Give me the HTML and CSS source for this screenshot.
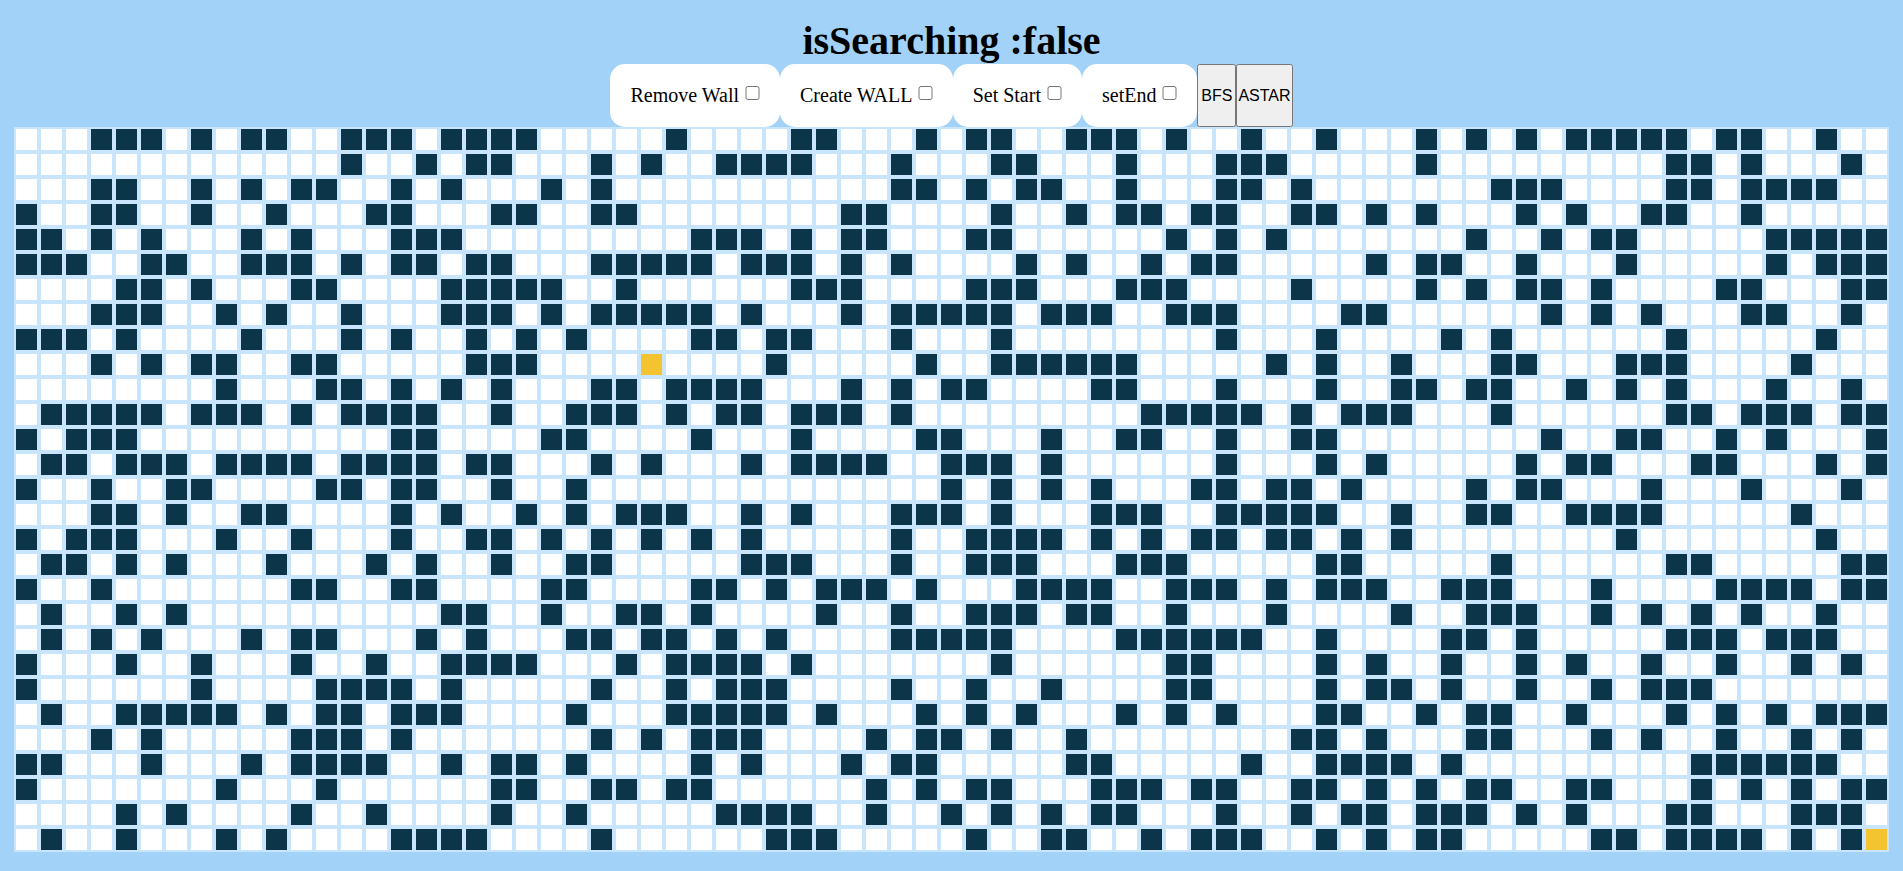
FILE: index.html
```html
<!DOCTYPE html>
<html lang="en">
<head>
<meta charset="utf-8">
<title>Pathfinding</title>
<link rel="stylesheet" href="styles.css">
</head>
<body>
<main class="app">
  <h1 class="status">isSearching :false</h1>
  <div class="controls">
    <label class="control">Remove Wall <input class="toggle" type="checkbox"></label>
    <label class="control">Create WALL <input class="toggle" type="checkbox"></label>
    <label class="control">Set Start <input class="toggle" type="checkbox"></label>
    <label class="control">setEnd <input class="toggle" type="checkbox"></label>
    <button class="run" type="button">BFS</button>
    <button class="run" type="button">ASTAR</button>
  </div>
  <div class="grid" id="grid"></div>
</main>
<script src="script.js"></script>
</body>
</html>
```
FILE: styles.css
```css
html, body {
  margin: 0;
  height: 100%;
}
body {
  background: #a2d2f7;
  color: #000;
  font-family: "Liberation Serif", "Times New Roman", serif;
  overflow: hidden;
}
.app {
  display: flex;
  flex-direction: column;
  align-items: center;
}
.status {
  margin: 18px 0 0;
  font-size: 40px;
  line-height: 46px;
  font-weight: bold;
}
.controls {
  display: flex;
  justify-content: center;
  align-items: stretch;
}
.control {
  padding: 20px 18px 20px 20px;
  background: #fff;
  border-radius: 15px;
  font-size: 20px;
  line-height: 23px;
}
.toggle {
  width: 15px;
  height: 14px;
  margin: 0 2px 0 1px;
  vertical-align: 2px;
}
.run {
  min-width: 39px;
  padding: 0;
  font-family: "Liberation Sans", Arial, sans-serif;
  font-size: 16px;
  color: #000;
}
.grid {
  display: grid;
  grid-template-columns: repeat(75, 25px);
  grid-auto-rows: 25px;
}
.cell {
  box-sizing: border-box;
  border: 2px solid #c8e5fc;
  background: #fff;
}
.wall {
  background: #0d3549;
}
.node {
  background: #f4c430;
}
```
FILE: script.js
```js
var WALLS = [
  [3,4,5,7,9,10,13,14,15,17,18,19,20,26,31,32,36,38,39,42,43,44,46,49,52,56,58,60,62,63,64,65,66,68,69,72],
  [13,16,18,19,23,25,28,29,30,31,35,39,40,44,48,49,50,56,66,67,69,73],
  [3,4,7,9,11,12,15,17,21,23,35,36,38,40,41,44,48,49,51,59,60,61,66,67,69,70,71,72],
  [0,3,4,7,10,14,15,19,20,23,24,33,34,39,42,44,45,47,48,51,52,54,56,60,62,65,66,69],
  [0,1,3,5,9,11,15,16,17,27,28,29,31,33,34,38,39,46,48,50,58,61,63,64,70,71,72,73,74],
  [0,1,2,5,6,9,10,11,13,15,16,18,19,23,24,25,26,27,29,30,31,33,35,40,42,45,47,48,54,56,57,60,64,70,72,73,74],
  [4,5,7,11,12,17,18,19,20,21,24,31,32,33,38,39,40,44,45,46,51,56,58,60,61,63,68,69,73,74],
  [3,4,5,8,10,13,17,18,19,21,23,24,25,26,27,29,33,35,36,37,38,39,41,42,43,46,47,48,53,54,61,63,65,69,70,73],
  [0,1,2,4,9,13,15,18,20,22,27,28,30,31,35,39,48,52,57,59,66,72],
  [3,5,7,8,11,12,18,19,20,30,36,39,40,41,42,43,44,50,52,55,59,60,64,65,66,71],
  [8,12,13,15,17,19,23,24,26,27,28,29,33,35,37,38,43,44,48,52,55,56,58,59,62,64,66,70,73],
  [1,2,3,4,5,7,8,9,11,13,14,15,16,19,22,23,24,26,28,29,31,32,33,35,45,46,47,48,49,51,53,54,55,59,66,67,69,70,71,73,74],
  [0,2,3,4,15,16,21,22,27,31,36,37,41,44,45,48,51,52,61,64,65,68,70,74],
  [1,2,4,5,6,8,9,10,11,13,14,15,16,18,19,23,25,29,31,32,33,34,37,38,39,41,48,52,54,60,62,63,67,68,72,74],
  [0,3,6,7,12,13,15,16,19,22,37,39,41,43,47,48,50,51,53,58,60,61,65,69,73],
  [3,4,6,9,10,15,17,20,22,24,25,26,29,31,35,36,37,39,43,44,45,48,49,50,51,52,55,58,59,62,63,64,65,71],
  [0,2,3,4,8,11,15,18,19,21,23,25,27,29,35,38,39,40,41,43,45,47,48,50,51,53,55,64,72],
  [1,2,4,6,10,14,16,19,22,23,29,30,31,35,38,39,40,44,45,46,52,53,59,66,67,73,74],
  [0,3,11,12,15,16,21,22,27,28,30,32,33,34,36,40,41,42,43,46,47,48,50,52,53,54,57,58,59,63,68,69,70,71,73,74],
  [1,4,6,17,18,21,24,25,27,32,35,38,39,40,42,43,46,50,55,58,59,60,63,65,67,69,72],
  [1,3,5,9,11,12,16,18,22,23,25,26,28,30,35,36,37,38,39,44,45,46,47,48,49,52,57,58,60,66,67,68,70,71,72],
  [0,4,7,11,14,17,18,19,20,24,26,27,28,29,31,39,46,47,52,54,57,60,62,65,68,71,73],
  [0,7,12,13,14,15,17,23,26,28,29,30,35,38,41,46,47,52,54,55,57,60,63,65,66,67],
  [1,4,5,6,7,8,10,12,13,15,16,17,22,26,27,28,29,30,32,36,38,40,44,46,48,52,53,56,58,59,62,66,68,70,72,73,74],
  [3,5,11,12,13,15,23,25,27,28,29,34,36,37,39,42,51,52,54,58,59,63,65,68,71,73],
  [0,1,5,9,11,12,13,14,17,19,20,22,27,29,33,35,36,42,43,49,52,53,54,55,57,67,68,69,70,71,72],
  [0,8,12,19,20,23,24,26,27,34,36,38,39,43,44,45,47,48,51,52,54,56,58,59,62,63,67,69,71,73,74],
  [4,6,11,14,19,22,28,29,30,31,34,37,39,41,43,44,48,51,53,54,56,57,58,60,62,66,67,71,72,73],
  [1,4,8,10,15,16,17,18,23,30,31,32,38,41,42,45,47,48,49,52,54,56,57,63,64,66,67,68,69,71,73]
];
var NODES = { "9:25": true, "28:74": true };
var grid = document.getElementById("grid");
var fragment = document.createDocumentFragment();
WALLS.forEach(function (walls, row) {
  for (var col = 0; col < 75; col++) {
    var cell = document.createElement("div");
    cell.className = "cell";
    if (walls.indexOf(col) !== -1) cell.className += " wall";
    if (NODES[row + ":" + col]) cell.className += " node";
    fragment.appendChild(cell);
  }
});
grid.appendChild(fragment);
```
